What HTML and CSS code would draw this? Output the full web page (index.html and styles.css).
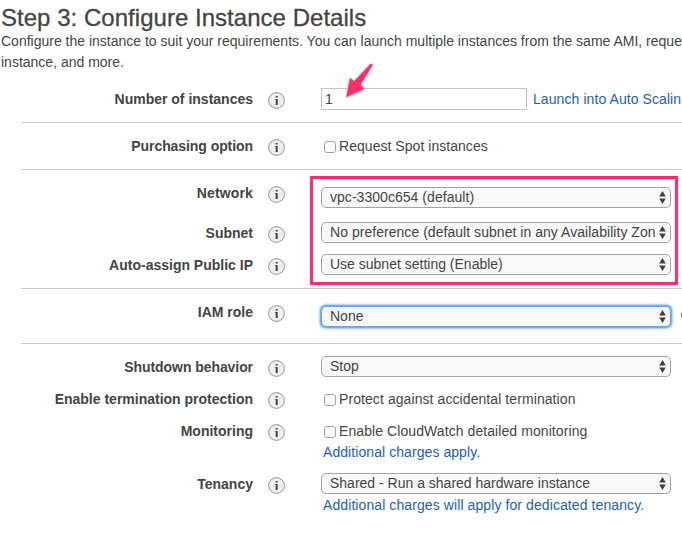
FILE: index.html
```html
<!DOCTYPE html>
<html lang="en">
<head>
<meta charset="utf-8">
<title>Configure Instance Details</title>
<link rel="stylesheet" href="styles.css">
</head>
<body>
<svg class="defs" width="0" height="0" aria-hidden="true">
  <symbol id="info" viewBox="0 0 17 17">
    <circle cx="8.5" cy="8.5" r="7.9" fill="#efefef" stroke="#929292" stroke-width="1"/>
    <path d="M7.7 3.9h2v1.7h-2zM7.2 6.9h2.5V13h-2V8.1h-.5z" fill="#444"/>
  </symbol>
  <symbol id="updown" viewBox="0 0 7 13">
    <path d="M3.5 0 6.8 5.4H.2zM.2 7.5h6.6L3.5 12.9z" fill="#404040"/>
  </symbol>
</svg>
<main class="page">
  <h1>Step 3: Configure Instance Details</h1>
  <p class="intro">Configure the instance to suit your requirements. You can launch multiple instances from the same AMI, reque<br>instance, and more.</p>

  <section class="group first">
    <div class="row">
      <span class="label">Number of instances</span><svg class="info"><use href="#info"/></svg>
      <div class="control inline"><div class="field">1
        <svg class="arrow" viewBox="0 0 32 40"><path d="M23.8 2.6Q26.4.6 26.6 3L14.7 22.6 18.4 26.7.3 34.9 4 15.8 8 19.2z" fill="#ff2d6b"/></svg>
      </div><a class="side">Launch into Auto Scalin</a></div>
    </div>
  </section>

  <section class="group">
    <div class="row">
      <span class="label tight">Purchasing option</span><svg class="info"><use href="#info"/></svg>
      <div class="control"><label class="check"><i class="box"></i><span class="wide">Request Spot instances</span></label></div>
    </div>
  </section>

  <section class="group network">
    <div class="row tall">
      <span class="label loose">Network</span><svg class="info"><use href="#info"/></svg>
      <div class="control low"><div class="select"><span class="wide">vpc-3300c654 (default)</span><svg class="updown"><use href="#updown"/></svg></div></div>
    </div>
    <div class="row short">
      <span class="label">Subnet</span><svg class="info"><use href="#info"/></svg>
      <div class="control"><div class="select"><span class="wide">No preference (default subnet in any Availability Zon</span><svg class="updown"><use href="#updown"/></svg></div></div>
    </div>
    <div class="row">
      <span class="label">Auto-assign Public IP</span><svg class="info"><use href="#info"/></svg>
      <div class="control"><div class="select"><span>Use subnet setting (Enable)</span><svg class="updown"><use href="#updown"/></svg></div></div>
    </div>
    <div class="highlight"></div>
  </section>

  <section class="group">
    <div class="row iam">
      <span class="label">IAM role</span><svg class="info"><use href="#info"/></svg>
      <div class="control low inline"><div class="select focused"><span>None</span><svg class="updown"><use href="#updown"/></svg></div><i class="refresh"></i></div>
    </div>
  </section>

  <section class="group last">
    <div class="row short">
      <span class="label tight">Shutdown behavior</span><svg class="info"><use href="#info"/></svg>
      <div class="control"><div class="select"><span>Stop</span><svg class="updown"><use href="#updown"/></svg></div></div>
    </div>
    <div class="row short">
      <span class="label">Enable termination protection</span><svg class="info"><use href="#info"/></svg>
      <div class="control"><label class="check"><i class="box"></i><span class="wider">Protect against accidental termination</span></label></div>
    </div>
    <div class="row double">
      <span class="label">Monitoring</span><svg class="info"><use href="#info"/></svg>
      <div class="control"><label class="check"><i class="box"></i><span class="wider">Enable CloudWatch detailed monitoring</span></label><a class="note">Additional charges apply.</a></div>
    </div>
    <div class="row double">
      <span class="label">Tenancy</span><svg class="info"><use href="#info"/></svg>
      <div class="control"><div class="select"><span>Shared - Run a shared hardware instance</span><svg class="updown"><use href="#updown"/></svg></div><a class="note below">Additional charges will apply for dedicated tenancy.</a></div>
    </div>
  </section>
</main>
</body>
</html>
```
FILE: styles.css
```css
* { box-sizing: border-box; }
body {
  margin: 0;
  overflow: hidden;
  background: #fff;
  color: #444;
  font: 14px/20px "Liberation Sans", Arial, sans-serif;
  white-space: nowrap;
}
.defs { position: absolute; }
.page { width: 682px; height: 538px; overflow: hidden; }
h1 {
  margin: 0;
  padding: 3px 0 0 1px;
  height: 31px;
  font-size: 24px;
  line-height: 30px;
  font-weight: 400;
  letter-spacing: .03px;
  -webkit-text-stroke: .3px #444;
}
.intro { margin: 0; padding-left: 1px; height: 44px; line-height: 21px; }
.group {
  position: relative;
  margin-left: 21px;
  padding-top: 13px;
  border-bottom: 1px solid #ccc;
}
.first { padding-top: 14px; }
.last { border-bottom: 0; }
.row {
  display: grid;
  grid-template-columns: 232px 17px 1fr;
  column-gap: 15px;
  align-items: start;
  height: 33px;
}
.tall { height: 40px; }
.short { height: 32px; }
.iam { height: 41px; }
.double { height: 53px; }
.label { text-align: right; font-weight: 700; }
.tight { letter-spacing: -.07px; }
.loose { letter-spacing: .15px; }
.wide { letter-spacing: .04px; }
.wider { letter-spacing: .08px; }
.info { width: 17px; height: 17px; margin-top: 3px; }
.control { margin: -1px 0 0 21px; }
.low { margin-top: 4px; }
.inline { display: flex; }
.field {
  position: relative;
  width: 206px;
  height: 22px;
  padding-left: 3px;
  border: 1px solid #c4c4c4;
  line-height: 21px;
}
.arrow {
  position: absolute;
  left: 24px;
  top: -27px;
  width: 32px;
  height: 40px;
  filter: drop-shadow(0 1px 1px rgba(0, 0, 0, .35));
}
a { color: #1b5dbd; }
.side { margin-left: 6px; line-height: 22px; letter-spacing: .08px; }
.check { display: flex; padding-left: 3px; line-height: 22px; }
.box {
  width: 12px;
  height: 12px;
  margin: 6px 3px 0 0;
  border: 1px solid #a0a0a0;
  border-radius: 3px;
}
.select {
  display: flex;
  justify-content: space-between;
  width: 350px;
  height: 21px;
  padding: 0 4px 0 8px;
  border: 1px solid #a2a2a2;
  border-radius: 5px;
  background: #f8f8f8;
  line-height: 19px;
}
.updown { width: 7px; height: 13px; margin-top: 3px; }
.focused { border-color: #6aa5e8; box-shadow: 0 0 0 1px #6eb0f5, 0 0 2px 2px #9bcbfb; }
.refresh {
  flex: none;
  width: 12px;
  height: 12px;
  margin: 3px 0 0 10px;
  border: 2px solid #666;
  border-radius: 50%;
}
.note { display: block; margin-left: 2px; line-height: 20px; letter-spacing: .07px; }
.below { line-height: 22px; letter-spacing: .09px; }
.highlight {
  position: absolute;
  left: 289px;
  top: 6px;
  width: 368px;
  height: 109px;
  border: 3px solid #ff2d6b;
}
```
